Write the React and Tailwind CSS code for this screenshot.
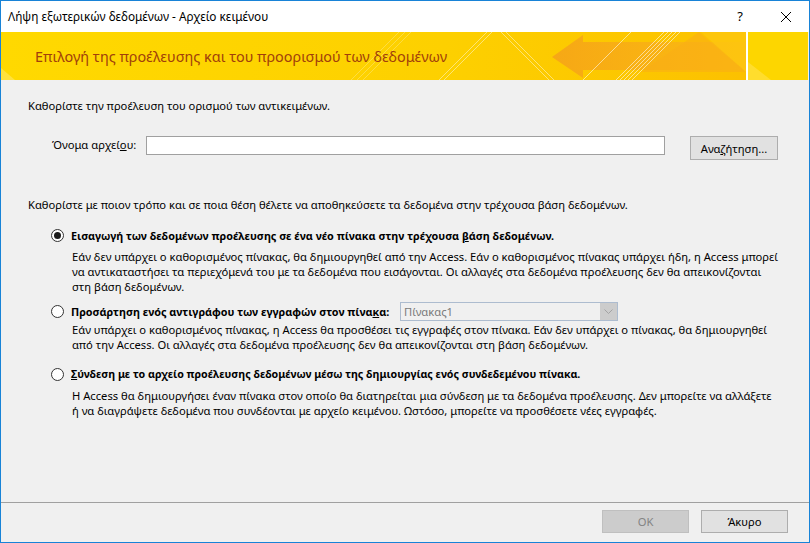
import React from "react";

// banner artwork, drawn over the yellow strip
const BannerArt = () => (
  <svg className="absolute inset-0" width="807" height="48" viewBox="0 0 807 48">
    <defs>
      <linearGradient id="bg" x1="0" y1="0" x2="1" y2="0">
        <stop offset="0" stopColor="#ffd900" />
        <stop offset="0.55" stopColor="#fdd000" />
        <stop offset="0.92" stopColor="#fcc100" />
      </linearGradient>
      <linearGradient id="arrow" x1="0" y1="0" x2="1" y2="0">
        <stop offset="0" stopColor="#f59f1b" />
        <stop offset="1" stopColor="#fbbb14" />
      </linearGradient>
    </defs>
    <rect width="807" height="48" fill="url(#bg)" />
    <polygon points="0,48 0,36 14,48" fill="#ffe766" opacity="0.6" />
    {/* faint diagonal lines */}
    <g stroke="#fff" strokeWidth="1" opacity="0.25">
      <line x1="350" y1="48" x2="398" y2="0" />
      <line x1="356" y1="48" x2="404" y2="0" />
      <line x1="362" y1="48" x2="410" y2="0" />
    </g>
    {/* triangle strokes */}
    <g stroke="#fff" strokeWidth="1" opacity="0.45">
      <line x1="438" y1="48" x2="486" y2="0" />
      <line x1="443" y1="48" x2="491" y2="0" />
      <line x1="500" y1="0" x2="548" y2="48" />
      <line x1="505" y1="0" x2="553" y2="48" />
    </g>
    {/* arrow */}
    <polygon points="551,25 582,3 582,10 745,10 745,38 582,38 582,46" fill="url(#arrow)" opacity="0.8" />
    <polygon points="700,0 745,40 745,0" fill="#fdc70f" opacity="0.7" />
    <polygon points="640,40 698,0 745,40" fill="#f9ad16" opacity="0.55" />
    <g stroke="#fff" strokeWidth="1" opacity="0.55">
      <line x1="582" y1="48" x2="630" y2="0" />
      <line x1="615" y1="48" x2="663" y2="0" />
      <line x1="619" y1="48" x2="667" y2="0" />
      <line x1="623" y1="48" x2="671" y2="0" />
      <line x1="627" y1="48" x2="675" y2="0" />
      <line x1="631" y1="48" x2="679" y2="0" />
    </g>
    <rect x="745" y="0" width="2" height="48" fill="#fff" />
    <rect x="747" y="0" width="60" height="48" fill="#fdd600" />
    <polygon points="747,48 747,30 770,48" fill="#ffe040" opacity="0.7" />
  </svg>
);

const Radio = ({ checked }) => (
  <span className="flex h-[13px] w-[13px] shrink-0 items-center justify-center rounded-full border border-[#333] bg-white">
    {checked && <span className="h-[7px] w-[7px] rounded-full bg-[#1b1b1b]" />}
  </span>
);

const App = () => {
  return (
    <div
      className="flex h-[543px] w-[810px] flex-col border border-[#1883d7] bg-[#f0f0f0] text-[11.2px] leading-[15px] text-black"
      style={{ fontFamily: '"Noto Sans", "Open Sans", sans-serif' }}
    >
      {/* title bar */}
      <div className="flex h-[31px] shrink-0 items-center bg-white pl-[7px] text-[11.8px]">
        <span className="flex-1">Λήψη εξωτερικών δεδομένων - Αρχείο κειμένου</span>
        <span className="w-[46px] text-center text-[13px]">?</span>
        <span className="flex w-[46px] items-center justify-center">
          <svg width="10" height="10" viewBox="0 0 10 10">
            <path d="M0 0 L10 10 M10 0 L0 10" stroke="#000" strokeWidth="1" />
          </svg>
        </span>
      </div>

      {/* banner */}
      <div className="relative h-[48px] shrink-0 overflow-hidden">
        <BannerArt />
        <div className="relative flex h-full items-center pl-[34px] text-[14.4px] text-[#a13f0b]">
          Επιλογή της προέλευσης και του προορισμού των δεδομένων
        </div>
      </div>

      {/* body */}
      <div className="flex-1 pl-[27px] pr-[30px]">
        <p className="mt-[18px]">Καθορίστε την προέλευση του ορισμού των αντικειμένων.</p>

        <div className="mt-[23px] flex items-start">
          <span className="mt-[1px] w-[118px] pl-[24px]">
            Όνομα αρχεί<span className="underline">ο</span>υ:
          </span>
          <div className="h-[19px] w-[519px] border border-[#a0a0a0] bg-white" />
          <button className="ml-[25px] h-[24px] w-[88px] border border-[#adadad] bg-[#e1e1e1]">
            Ανα<span className="underline">ζ</span>ήτηση...
          </button>
        </div>

        <p className="mt-[37px]">
          Καθορίστε με ποιον τρόπο και σε ποια θέση θέλετε να αποθηκεύσετε τα δεδομένα στην τρέχουσα βάση δεδομένων.
        </p>

        {/* option 1 */}
        <div className="mt-[16px] flex h-[15px] items-center gap-[7px] pl-[23px]">
          <Radio checked />
          <span className="text-[10.8px] font-bold">
            Εισαγωγή των δεδομένων προέλευσης σε ένα νέο πίνακα στην τρέχουσα <span className="underline">β</span>άση δεδομένων.
          </span>
        </div>
        <p className="mt-[6px] pl-[44px]">
          Εάν δεν υπάρχει ο καθορισμένος πίνακας, θα δημιουργηθεί από την Access. Εάν ο καθορισμένος πίνακας υπάρχει ήδη, η Access μπορεί να αντικαταστήσει τα περιεχόμενά του με τα δεδομένα που εισάγονται. Οι αλλαγές στα δεδομένα προέλευσης δεν θα απεικονίζονται στη βάση δεδομένων.
        </p>

        {/* option 2 */}
        <div className="mt-[8px] flex h-[19px] items-center pl-[23px]">
          <Radio />
          <span className="ml-[7px] w-[329px] text-[10.8px] font-bold">
            Προσάρτηση ενός αντιγράφου των εγγραφών στον πίνα<span className="underline">κ</span>α:
          </span>
          <div className="flex h-[19px] w-[218px] items-stretch border border-[#adbccf] bg-[#f0f0f0]">
            <span className="flex-1 pl-[3px] leading-[17px] text-[#7a7a7a]">Πίνακας1</span>
            <span className="flex w-[17px] items-center justify-center bg-[#cccccc]">
              <svg width="9" height="5" viewBox="0 0 9 5">
                <path d="M0.5 0.5 L4.5 4.5 L8.5 0.5" stroke="#a3a3a3" fill="none" />
              </svg>
            </span>
          </div>
        </div>
        <p className="mt-[1px] pl-[44px]">
          Εάν υπάρχει ο καθορισμένος πίνακας, η Access θα προσθέσει τις εγγραφές στον πίνακα. Εάν δεν υπάρχει ο πίνακας, θα δημιουργηθεί από την Access. Οι αλλαγές στα δεδομένα προέλευσης δεν θα απεικονίζονται στη βάση δεδομένων.
        </p>

        {/* option 3 */}
        <div className="mt-[15px] flex h-[15px] items-center gap-[7px] pl-[23px]">
          <Radio />
          <span className="text-[10.65px] font-bold">
            <span className="underline">Σ</span>ύνδεση με το αρχείο προέλευσης δεδομένων μέσω της δημιουργίας ενός συνδεδεμένου πίνακα.
          </span>
        </div>
        <p className="mt-[6px] pl-[44px]">
          Η Access θα δημιουργήσει έναν πίνακα στον οποίο θα διατηρείται μια σύνδεση με τα δεδομένα προέλευσης. Δεν μπορείτε να αλλάξετε ή να διαγράψετε δεδομένα που συνδέονται με αρχείο κειμένου. Ωστόσο, μπορείτε να προσθέσετε νέες εγγραφές.
        </p>
      </div>

      {/* footer */}
      <div className="flex h-[40px] shrink-0 items-start justify-end gap-[12px] border-t border-[#a0a0a0] pr-[21px] pt-[7px]">
        <button className="h-[23px] w-[87px] border border-[#bfbfbf] bg-[#cccccc] text-[#838383]">OK</button>
        <button className="h-[23px] w-[87px] border border-[#adadad] bg-[#e1e1e1]">Άκυρο</button>
      </div>
    </div>
  );
};

export default App;
